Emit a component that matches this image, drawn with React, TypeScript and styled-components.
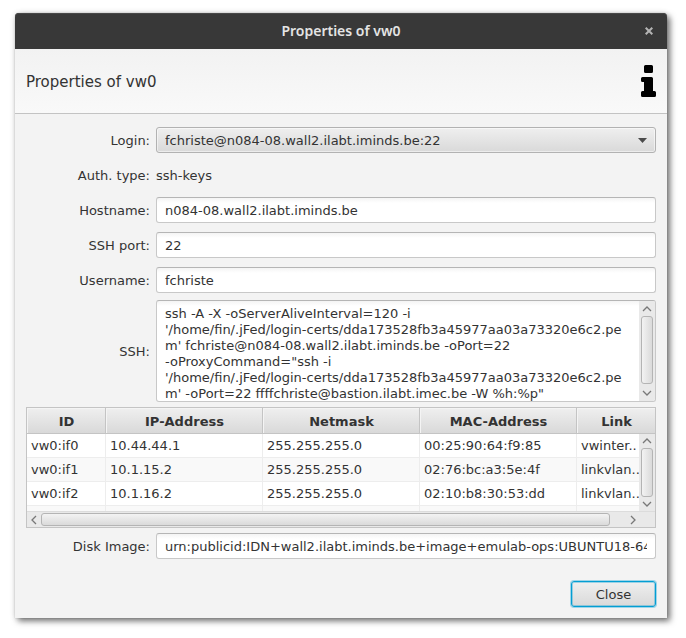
import React from 'react';
import styled, { createGlobalStyle } from 'styled-components';

const GlobalStyle = createGlobalStyle`
  *, *::before, *::after { box-sizing: border-box; }
  body {
    margin: 0;
    background: #fff;
    color: #333;
    font: 13px/16px "DejaVu Sans", sans-serif;
  }
  button, input, select, textarea { font: inherit; color: inherit; margin: 0; }
`;

const Dialog = styled.main`
  margin: 13px 19px 20px 15px;
  border-radius: 4px 4px 0 0;
  background: #f3f3f3;
  box-shadow: 3px 3px 6px rgba(0, 0, 0, 0.55), 0 0 1px rgba(0, 0, 0, 0.3), 0 0 6px rgba(0, 0, 0, 0.1);
`;

const TitleBar = styled.header`
  display: grid;
  grid-template-columns: 36px 1fr 36px;
  align-items: center;
  height: 36px;
  border-radius: 4px 4px 0 0;
  background: #383838;
  box-shadow: inset 0 1px #484848;
`;

const WindowTitle = styled.span`
  grid-column: 2;
  color: #e4e4e4;
  font: 600 14px/20px "Noto Sans", sans-serif;
  text-align: center;
`;

const WindowClose = styled.button`
  display: grid;
  place-items: center;
  height: 36px;
  padding: 0;
  border: 0;
  background: none;
  color: #b4b4b4;
`;

const Banner = styled.div`
  display: flex;
  align-items: center;
  justify-content: space-between;
  height: 65px;
  padding: 0 11px;
  border-bottom: 1px solid #c3c3c3;
  background: linear-gradient(#f2f2f2, #f9f9f9);
`;

const Heading = styled.h1`
  margin: 0;
  padding-top: 2px;
  font-size: 15px;
  line-height: 20px;
  font-weight: 400;
`;

const Content = styled.form`
  display: flex;
  flex-direction: column;
  gap: 5px;
  padding: 13px 11px 11px;
`;

const Fields = styled.div`
  display: flex;
  flex-direction: column;
  gap: 9px;
  padding-bottom: 2px;
`;

const Row = styled.div`
  display: grid;
  grid-template-columns: 124px minmax(0, 1fr);
  column-gap: 6px;
  align-items: center;
  min-height: 26px;
`;

const Label = styled.label`
  padding-top: 2px;
  text-align: right;
`;

const Value = styled.span`
  padding-top: 2px;
`;

const TextField = styled.input`
  width: 100%;
  height: 26px;
  padding: 0 8px;
  border: 1px solid #c8c8c8;
  border-top-color: #b5b5b5;
  border-radius: 3px;
  background: linear-gradient(#f4f4f4, #fff 5px);
  outline: 0;
`;

const SelectBox = styled.div`
  position: relative;
`;

const Select = styled.select`
  display: block;
  appearance: none;
  width: 100%;
  height: 26px;
  padding: 2px 28px 0 8px;
  border: 1px solid #b2b2b2;
  border-radius: 3px;
  background: linear-gradient(#efefef, #d9d9d9);
  box-shadow: inset 0 0 0 1px rgba(255, 255, 255, 0.5);
  outline: 0;
`;

const SelectArrow = styled.svg`
  position: absolute;
  top: 11px;
  right: 9px;
  pointer-events: none;
`;

const AreaBox = styled.div`
  display: flex;
  height: 102px;
  border: 1px solid #c8c8c8;
  border-top-color: #b5b5b5;
  border-radius: 3px;
  overflow: hidden;
  background: linear-gradient(#f4f4f4, #fff 5px);
`;

const TextArea = styled.textarea`
  flex: 1;
  min-width: 0;
  padding: 5px 8px 0;
  border: 0;
  background: none;
  white-space: pre;
  resize: none;
  overflow: hidden;
  outline: 0;
`;

const Bar = styled.div<{ $horizontal?: boolean }>`
  flex: none;
  display: flex;
  flex-direction: ${(p) => (p.$horizontal ? 'row' : 'column')};
  ${(p) =>
    p.$horizontal
      ? 'height: 16px; padding: 1px 15px 1px 0; border-top: 1px solid #dcdcdc;'
      : 'width: 16px; padding: 0 1px 0 2px;'}
  background: #e9e9e9;
`;

const Step = styled.button<{ $length: number; $horizontal?: boolean }>`
  display: grid;
  place-items: center;
  flex: 0 0 ${(p) => p.$length}px;
  ${(p) => (p.$horizontal ? 'height: 13px;' : 'width: 12px;')}
  padding: 0;
  border: 0;
  background: none;
  color: #787878;
`;

const Thumb = styled.div<{ $horizontal?: boolean }>`
  flex: 1;
  border: 1px solid #b4b4b4;
  border-radius: 3px;
  background: linear-gradient(${(p) => (p.$horizontal ? '180deg' : '90deg')}, #f3f3f3, #dadada);
  ${(p) => (p.$horizontal ? 'margin-right: 16px;' : 'width: 12px;')}
`;

const TableBox = styled.div`
  border: 1px solid #c4c4c4;
  background: #fff;
`;

const TableView = styled.div`
  position: relative;
  height: 103px;
  overflow: hidden;
`;

const TableBar = styled.div`
  position: absolute;
  top: 26px;
  right: 0;
  bottom: 0;
  display: flex;
`;

const Table = styled.table`
  width: 100%;
  table-layout: fixed;
  border-collapse: separate;
  border-spacing: 0;
`;

const HeadCell = styled.th`
  height: 26px;
  padding: 2px 0 0 1px;
  border-right: 1px solid #c4c4c4;
  border-bottom: 1px solid #c4c4c4;
  background: linear-gradient(#efefef, #d9d9d9);
  box-shadow: inset 1px 1px #f4f4f4;
  font-weight: 700;
  &:first-child { width: 79px; }
  &:last-child { width: 78px; border-right: 0; }
`;

const Cell = styled.td`
  height: 24px;
  padding: 0 4px;
  border-right: 1px solid #ededed;
  border-bottom: 1px solid #ededed;
  white-space: nowrap;
  overflow: hidden;
  tr:nth-child(even) & { background: #f9f9f9; }
  &:last-child { border-right: 0; }
`;

const Actions = styled.div`
  display: flex;
  justify-content: flex-end;
  padding-top: 17px;
`;

const CloseButton = styled.button`
  width: 85px;
  height: 26px;
  padding: 2px 0 0;
  border: 1px solid #039ed3;
  border-radius: 3px;
  background: linear-gradient(#efefef, #d9d9d9);
  box-shadow: 0 0 0 1px rgba(3, 158, 211, 0.35), inset 0 0 0 1px rgba(3, 158, 211, 0.35);
`;

const turns = { up: 0, right: 90, down: 180, left: 270 };

function Chevron({ to }: { to: keyof typeof turns }) {
  return (
    <svg width="10" height="10" viewBox="0 0 10 10" aria-hidden="true">
      <path
        d="M1 7 5 3l4 4"
        fill="none"
        stroke="currentColor"
        strokeWidth="1.3"
        transform={`rotate(${turns[to]} 5 5)`}
      />
    </svg>
  );
}

function VerticalBar({ start, end }: { start: number; end: number }) {
  return (
    <Bar>
      <Step type="button" $length={start} aria-label="Scroll up"><Chevron to="up" /></Step>
      <Thumb />
      <Step type="button" $length={end} aria-label="Scroll down"><Chevron to="down" /></Step>
    </Bar>
  );
}

const command = [
  'ssh -A -X -oServerAliveInterval=120 -i',
  "'/home/fin/.jFed/login-certs/dda173528fb3a45977aa03a73320e6c2.pe",
  "m' fchriste@n084-08.wall2.ilabt.iminds.be -oPort=22",
  '-oProxyCommand="ssh -i',
  "'/home/fin/.jFed/login-certs/dda173528fb3a45977aa03a73320e6c2.pe",
  'm\' -oPort=22 ffffchriste@bastion.ilabt.imec.be -W %h:%p"',
].join('\n');

const textFields = [
  { id: 'hostname', label: 'Hostname:', value: 'n084-08.wall2.ilabt.iminds.be' },
  { id: 'port', label: 'SSH port:', value: '22' },
  { id: 'username', label: 'Username:', value: 'fchriste' },
];

const columns = ['ID', 'IP-Address', 'Netmask', 'MAC-Address', 'Link'];

const interfaces = [
  ['vw0:if0', '10.44.44.1', '255.255.255.0', '00:25:90:64:f9:85', 'vwinter..'],
  ['vw0:if1', '10.1.15.2', '255.255.255.0', '02:76:bc:a3:5e:4f', 'linkvlan..'],
  ['vw0:if2', '10.1.16.2', '255.255.255.0', '02:10:b8:30:53:dd', 'linkvlan..'],
  ['', '', '', '', ''],
];

export default function App() {
  return (
    <>
      <GlobalStyle />
      <Dialog>
        <TitleBar>
          <WindowTitle>Properties of vw0</WindowTitle>
          <WindowClose type="button" aria-label="Close window">
            <svg width="8" height="8" viewBox="0 0 8 8" aria-hidden="true">
              <path d="M0.7 0.7l6.6 6.6M7.3 0.7L0.7 7.3" stroke="currentColor" strokeWidth="2" />
            </svg>
          </WindowClose>
        </TitleBar>
        <Banner>
          <Heading>Properties of vw0</Heading>
          <svg width="15" height="32" viewBox="0 0 15 32" aria-hidden="true">
            <path d="M4.5 0h6Q12 0 12 1.5v5Q12 8 10.500 8h-6Q3 8 3 6.500v-5Q3 0 4.500 0zM1.500 12h9q1.500 0 1.500 1.500V26h1.500q1.500 0 1.500 1.500v3q0 1.500-1.500 1.500h-12Q0 32 0 30.500v-3Q0 26 1.500 26H3v-9H1.500Q0 17 0 15.500v-2Q0 12 1.500 12z" />
          </svg>
        </Banner>
        <Content>
          <Fields>
            <Row>
              <Label htmlFor="login">Login:</Label>
              <SelectBox>
                <Select id="login">
                  <option>fchriste@n084-08.wall2.ilabt.iminds.be:22</option>
                </Select>
                <SelectArrow width="9" height="5" viewBox="0 0 9 5" aria-hidden="true">
                  <path d="M0 0h9L4.500 5z" fill="#4b4b4b" />
                </SelectArrow>
              </SelectBox>
            </Row>
            <Row>
              <Label as="span">Auth. type:</Label>
              <Value>ssh-keys</Value>
            </Row>
            {textFields.map((f) => (
              <Row key={f.id}>
                <Label htmlFor={f.id}>{f.label}</Label>
                <TextField id={f.id} readOnly value={f.value} />
              </Row>
            ))}
          </Fields>
          <Row>
            <Label htmlFor="ssh">SSH:</Label>
            <AreaBox>
              <TextArea id="ssh" readOnly spellCheck={false} value={command} />
              <VerticalBar start={15} end={17} />
            </AreaBox>
          </Row>
          <TableBox>
            <TableView>
              <Table>
                <thead>
                  <tr>
                    {columns.map((c) => (
                      <HeadCell key={c} scope="col">{c}</HeadCell>
                    ))}
                  </tr>
                </thead>
                <tbody>
                  {interfaces.map((cells, r) => (
                    <tr key={r}>
                      {cells.map((cell, i) => <Cell key={i}>{cell}</Cell>)}
                    </tr>
                  ))}
                </tbody>
              </Table>
              <TableBar>
                <VerticalBar start={14} end={14} />
              </TableBar>
            </TableView>
            <Bar $horizontal>
              <Step type="button" $horizontal $length={14} aria-label="Scroll left"><Chevron to="left" /></Step>
              <Thumb $horizontal />
              <Step type="button" $horizontal $length={14} aria-label="Scroll right"><Chevron to="right" /></Step>
            </Bar>
          </TableBox>
          <Row>
            <Label htmlFor="image">Disk Image:</Label>
            <TextField
              id="image"
              readOnly
              value="urn:publicid:IDN+wall2.ilabt.iminds.be+image+emulab-ops:UBUNTU18-64-STD"
            />
          </Row>
          <Actions>
            <CloseButton type="button">Close</CloseButton>
          </Actions>
        </Content>
      </Dialog>
    </>
  );
}
